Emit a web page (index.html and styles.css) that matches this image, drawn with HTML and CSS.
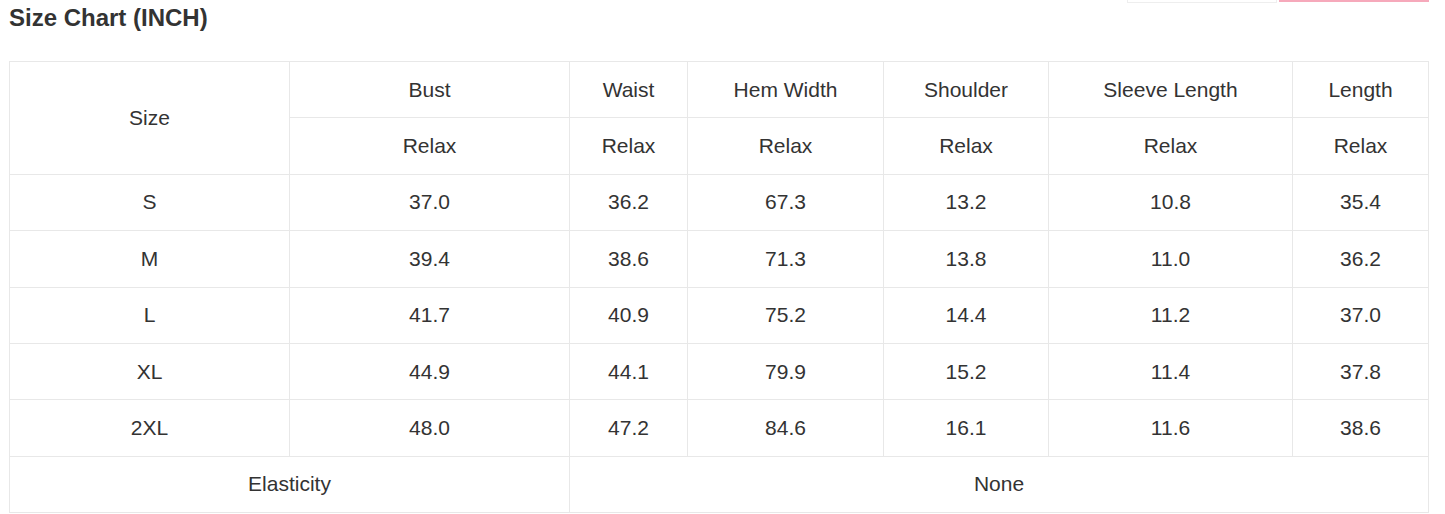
FILE: index.html
```html
<!DOCTYPE html>
<html>
<head>
<meta charset="utf-8">
<link rel="stylesheet" href="styles.css">
</head>
<body>
<div class="page">
  <div class="actions">
    <div class="btn btn-ghost"></div>
    <div class="btn btn-pink"></div>
  </div>
  <h2 class="title">Size Chart (INCH)</h2>
  <table class="chart">
    <colgroup>
      <col class="c1"><col class="c2"><col class="c3"><col class="c4"><col class="c5"><col class="c6"><col class="c7">
    </colgroup>
    <tbody>
      <tr><td rowspan="2">Size</td><td>Bust</td><td>Waist</td><td>Hem Width</td><td>Shoulder</td><td>Sleeve Length</td><td>Length</td></tr>
      <tr><td>Relax</td><td>Relax</td><td>Relax</td><td>Relax</td><td>Relax</td><td>Relax</td></tr>
      <tr><td>S</td><td>37.0</td><td>36.2</td><td>67.3</td><td>13.2</td><td>10.8</td><td>35.4</td></tr>
      <tr><td>M</td><td>39.4</td><td>38.6</td><td>71.3</td><td>13.8</td><td>11.0</td><td>36.2</td></tr>
      <tr><td>L</td><td>41.7</td><td>40.9</td><td>75.2</td><td>14.4</td><td>11.2</td><td>37.0</td></tr>
      <tr><td>XL</td><td>44.9</td><td>44.1</td><td>79.9</td><td>15.2</td><td>11.4</td><td>37.8</td></tr>
      <tr><td>2XL</td><td>48.0</td><td>47.2</td><td>84.6</td><td>16.1</td><td>11.6</td><td>38.6</td></tr>
      <tr><td colspan="2">Elasticity</td><td colspan="5">None</td></tr>
    </tbody>
  </table>
</div>
</body>
</html>
```
FILE: styles.css
```css
html, body {
  margin: 0;
  padding: 0;
  background: #fff;
}
.page {
  padding: 0 17px 0 9px;
  font-family: "Liberation Sans", Arial, sans-serif;
  color: #333;
}
.actions {
  display: flex;
  justify-content: flex-end;
  gap: 2px;
  height: 3px;
  margin-right: -1px;
}
.btn {
  width: 150px;
  box-sizing: border-box;
}
.btn-ghost {
  height: 3px;
  border: 1px solid #eeeeee;
  border-top: none;
}
.btn-pink {
  height: 2px;
  background: #f6a9bb;
}
.title {
  margin: 1px 0 0;
  font-size: 24px;
  line-height: 28px;
  font-weight: bold;
  color: #333;
}
.chart {
  margin-top: 29px;
  width: 1420px;
  border-collapse: collapse;
  table-layout: fixed;
}
.c1 { width: 280px; }
.c2 { width: 280px; }
.c3 { width: 118px; }
.c4 { width: 196px; }
.c5 { width: 165px; }
.c6 { width: 244px; }
.c7 { width: 136px; }
.chart td {
  border: 1px solid #e8e8e8;
  height: 55.375px;
  padding: 0;
  text-align: center;
  vertical-align: middle;
  font-size: 21px;
  color: #333;
}
```
